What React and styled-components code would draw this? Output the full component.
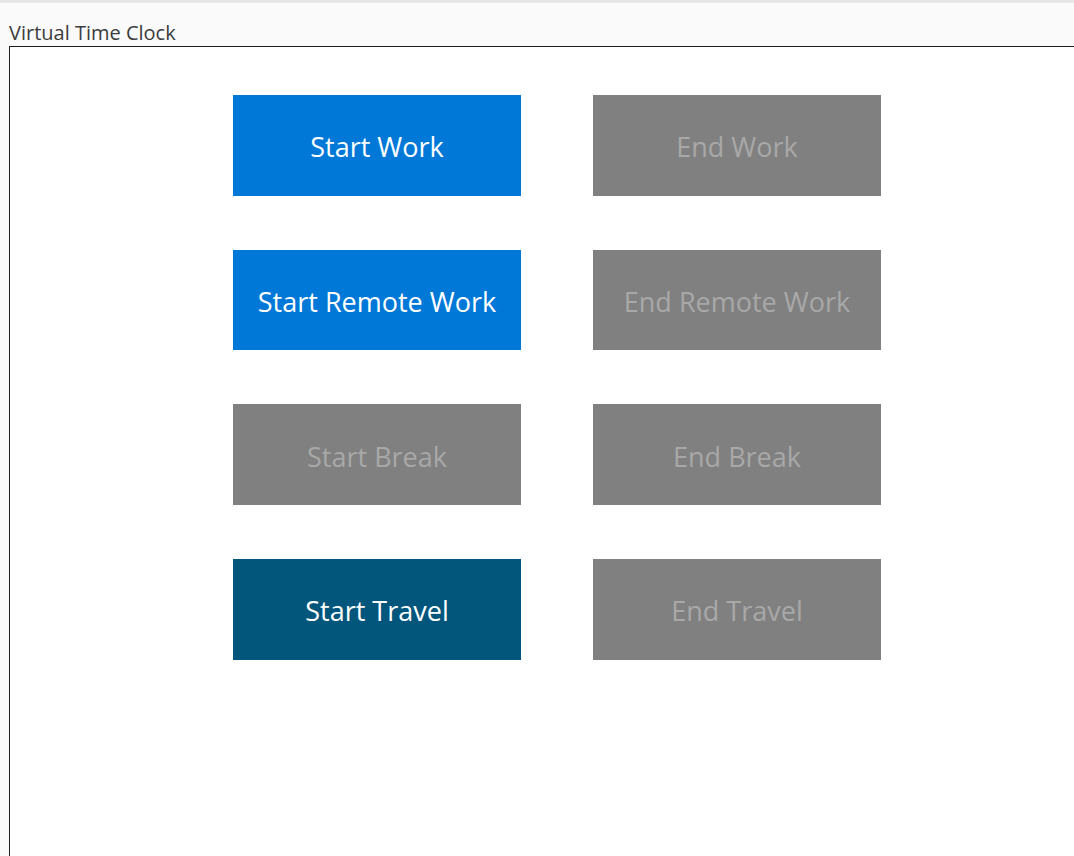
import React from "react";
import styled, { createGlobalStyle } from "styled-components";

const Global = createGlobalStyle`
  html, body { margin: 0; padding: 0; background: #fafafa; overflow: hidden; }
  body { font-family: "Open Sans", "Noto Sans", sans-serif; }
`;

const Page = styled.div`
  width: 1074px;
  height: 856px;
  display: flex;
  flex-direction: column;
  background: #fafafa;
  border-top: 3px solid #e6e6e6;
  box-sizing: border-box;
`;

const Title = styled.div`
  height: 43px;
  padding-left: 9px;
  display: flex;
  align-items: flex-end;
  font-size: 20px;
  color: #3c3c3c;
  line-height: 26px;
  box-sizing: border-box;
`;

const Frame = styled.div`
  flex: 1;
  margin-left: 9px;
  background: #ffffff;
  border: 1px solid #1e1e1e;
  border-right: none;
  border-bottom: none;
  padding: 48px 0 0 223px;
`;

const Grid = styled.div`
  display: grid;
  grid-template-columns: 288px 288px;
  column-gap: 72px;
  row-gap: 54px;
`;

const ClockButton = styled.button`
  height: 100.67px;
  border: none;
  padding: 3px 0 0;
  font-family: "Open Sans", "Noto Sans", sans-serif;
  font-size: 27px;
  cursor: ${(p) => (p.disabled ? "default" : "pointer")};
  background: ${(p) =>
    p.variant === "dark" ? "#02567c" : p.variant === "blue" ? "#0078d7" : "#808080"};
  color: ${(p) => (p.variant === "off" ? "#a8a8a8" : "#ffffff")};
`;

const buttons = [
  ["Start Work", "blue"],
  ["End Work", "off"],
  ["Start Remote Work", "blue"],
  ["End Remote Work", "off"],
  ["Start Break", "off"],
  ["End Break", "off"],
  ["Start Travel", "dark"],
  ["End Travel", "off"],
];

export default function App() {
  return (
    <>
      <Global />
      <Page>
        <Title>Virtual Time Clock</Title>
        <Frame>
          <Grid>
            {buttons.map(([label, variant]) => (
              <ClockButton key={label} variant={variant} disabled={variant === "off"}>
                {label}
              </ClockButton>
            ))}
          </Grid>
        </Frame>
      </Page>
    </>
  );
}
